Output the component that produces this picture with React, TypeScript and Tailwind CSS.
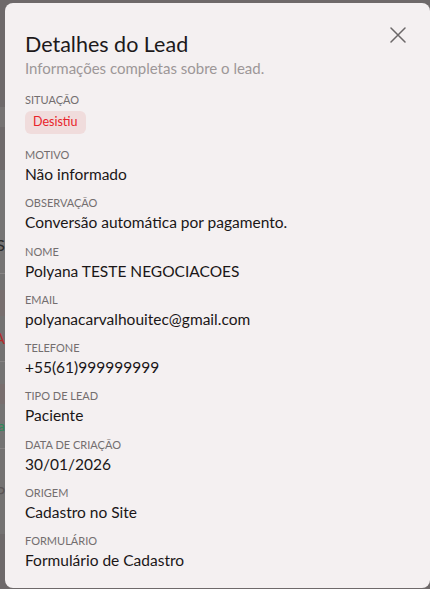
import React from "react";

const fields: { label: string; value: string }[] = [
  { label: "MOTIVO", value: "Não informado" },
  { label: "OBSERVAÇÃO", value: "Conversão automática por pagamento." },
  { label: "NOME", value: "Polyana TESTE NEGOCIACOES" },
  { label: "EMAIL", value: "polyanacarvalhouitec@gmail.com" },
  { label: "TELEFONE", value: "+55(61)999999999" },
  { label: "TIPO DE LEAD", value: "Paciente" },
  { label: "DATA DE CRIAÇÃO", value: "30/01/2026" },
  { label: "ORIGEM", value: "Cadastro no Site" },
  { label: "FORMULÁRIO", value: "Formulário de Cadastro" },
];

function Band({ h, color, children }: { h: string; color: string; children?: React.ReactNode }) {
  return (
    <div className={`${h} ${color} flex items-center justify-end overflow-hidden`}>{children}</div>
  );
}

export default function App() {
  return (
    <div
      className="relative w-[430px] h-[589px] overflow-hidden bg-[#6e696a]"
      style={{ fontFamily: "Lato, 'Noto Sans', sans-serif" }}
    >
      {/* dimmed page behind the dialog */}
      <div className="flex flex-col w-[5px] text-[14px] leading-none">
        <div className="h-[107px] bg-[#6e696a]" />
        <div className="h-[20px] bg-[#767373]" />
        <div className="h-[43px] bg-[#6f6a6b]" />
        <div className="h-[103px] bg-[#767474] flex items-end justify-end overflow-hidden pb-[20px]">
          <span className="text-[#2a2a2a] whitespace-nowrap text-[16px]">S</span>
        </div>
        <div className="h-px bg-[#888585]" />
        <div className="h-[16px] bg-[#737171]" />
        <div className="h-[26px] bg-[#776e6e]" />
        <Band h="h-[45px]" color="bg-[#737272]">
          <span className="text-[#b42a2a] whitespace-nowrap text-[15px]">A</span>
        </Band>
        <div className="h-px bg-[#868383]" />
        <div className="h-[22px] bg-[#747373]" />
        <div className="h-[20px] bg-[#786e6e]" />
        <Band h="h-[44px]" color="bg-[#747373]">
          <span className="text-[#2d8a5a] whitespace-nowrap text-[14px]">a</span>
        </Band>
        <div className="h-px bg-[#868383]" />
        <Band h="h-[85px]" color="bg-[#747272]">
          <span className="text-[#5b5556] whitespace-nowrap text-[16px]">P</span>
        </Band>
        <div className="h-[60px] bg-[#6e696a]" />
      </div>

      {/* dialog */}
      <div className="absolute left-[5px] top-[3px] w-[425px] h-[585px] rounded-[8px] bg-[#f4f0f1] pl-5 pt-[27px]">
        <button className="absolute right-[21px] top-[21px] w-[22px] h-[22px] flex items-center justify-center">
          <svg width="16" height="16" viewBox="0 0 16 16" fill="none">
            <path d="M1 1L15 15M15 1L1 15" stroke="#6b6768" strokeWidth="1.5" strokeLinecap="round" />
          </svg>
        </button>
        <h2 className="text-[21.5px] leading-7 text-[#1d191a] font-normal">Detalhes do Lead</h2>
        <p className="text-[15px] leading-5 text-[#9d9798]">Informações completas sobre o lead.</p>

        <div className="mt-[13.5px] flex flex-col">
          <span className="text-[11px] leading-4 text-[#736e6f]">SITUAÇÃO</span>
          <div className="mt-[3.5px] flex">
            <span className="h-[23px] px-2 rounded-md bg-[#f0dcdc] text-[#e8232a] text-[12.5px] flex items-center">
              Desistiu
            </span>
          </div>
        </div>

        <div className="mt-[13px] flex flex-col gap-[10.3px]">
          {fields.map((f) => (
            <div key={f.label} className="flex flex-col">
              <span className="text-[11px] leading-4 text-[#736e6f]">{f.label}</span>
              <span className="text-[15.5px] leading-[22px] text-[#1a1617]">{f.value}</span>
            </div>
          ))}
        </div>
      </div>
    </div>
  );
}
